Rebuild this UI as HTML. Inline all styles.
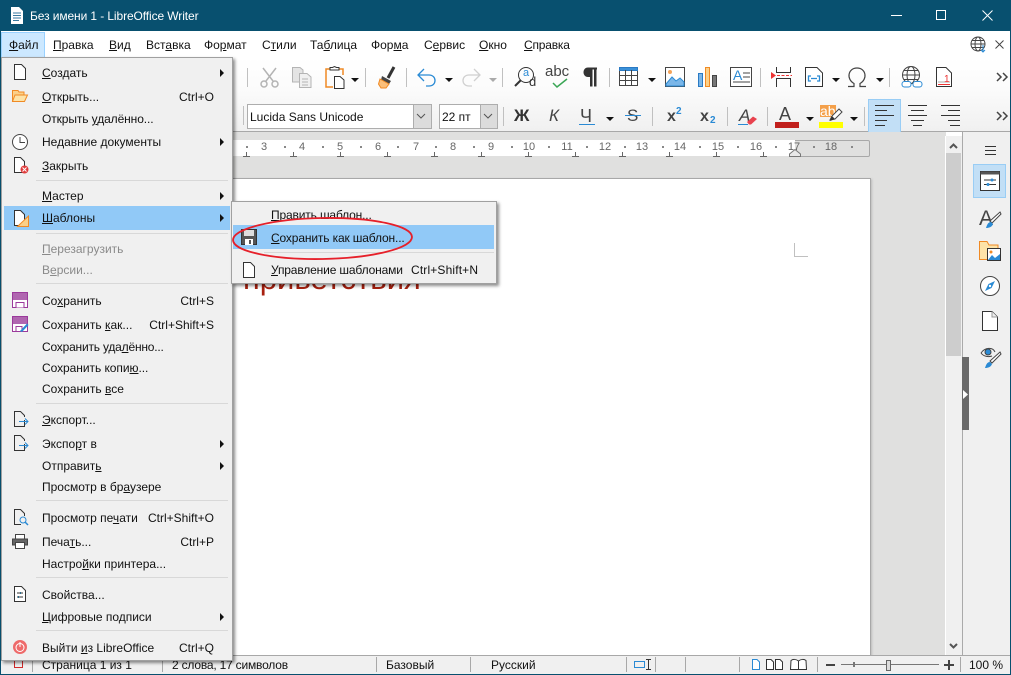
<!DOCTYPE html>
<html lang="ru"><head><meta charset="utf-8"><title>Без имени 1 - LibreOffice Writer</title>
<style>
html,body{margin:0;padding:0;background:#fff}
#w{position:relative;width:1011px;height:675px;overflow:hidden;background:#fff;font:12px/16px "Liberation Sans",sans-serif;color:#111}
.a{position:absolute}
.t{position:absolute;white-space:nowrap;line-height:16px}
.k{position:absolute;white-space:nowrap;line-height:16px;right:18px;text-align:right}
.s{position:absolute;background:#c0c0c0;width:1px}
.d{position:absolute;width:0;height:0;border-left:4px solid transparent;border-right:4px solid transparent;border-top:4px solid #111}
.m{position:absolute;left:35px;right:4px;height:1px;background:#d8d8d8}
.r{position:absolute;width:0;height:0;border-top:4px solid transparent;border-bottom:4px solid transparent;border-left:4px solid #111;left:219px}
.g{color:#8a8a8a}
svg{position:absolute;overflow:visible}
.n{position:absolute;top:140px;font-size:11px;line-height:14px;color:#666;width:16px;text-align:center}
.mk{position:absolute;top:146px;width:2px;height:2px;background:#888}
.bt{position:absolute;top:152px;width:7px;height:4px;border-bottom:1px solid #666}
.bt:after{content:"";position:absolute;left:3px;top:0;height:4px;width:1px;background:#666}
.st{position:absolute;top:657px;width:1px;height:15px;background:#a8a8a8}
</style></head><body><div id="w">

<!-- title bar -->
<div class="a" style="left:0;top:0;width:1011px;height:31px;background:#08506f"></div>
<svg style="left:11px;top:7px" width="12" height="17" viewBox="0 0 12 17"><path d="M0 0H8L12 4V17H0Z" fill="#fff"/><path d="M2 6H10M2 8.500H10M2 11H10M2 13.500H8" stroke="#3a7aa0"/></svg>
<div class="t" style="left:30px;top:8px;color:#fff;font-size:12px;letter-spacing:-.1px">Без имени 1 - LibreOffice Writer</div>
<div class="a" style="left:891px;top:15px;width:11px;height:1px;background:#fff"></div>
<div class="a" style="left:936px;top:10px;width:8px;height:8px;border:1px solid #fff"></div>
<svg style="left:982px;top:10px" width="11" height="11"><path d="M.5 .5L10.500 10.500M10.500 .5L.5 10.500" stroke="#fff"/></svg>
<div class="a" style="left:0;top:31px;width:1px;height:644px;background:#08506f"></div>
<div class="a" style="left:1010px;top:31px;width:1px;height:644px;background:#08506f"></div>

<!-- menu bar -->
<div class="a" style="left:1px;top:32px;width:42px;height:24px;background:#cce8ff;border:1px solid #99d1ff"></div>
<div class="t" style="left:9px;top:37px"><u>Ф</u>айл</div>
<div class="t" style="left:53px;top:37px"><u>П</u>равка</div>
<div class="t" style="left:109px;top:37px"><u>В</u>ид</div>
<div class="t" style="left:146px;top:37px">Вст<u>а</u>вка</div>
<div class="t" style="left:204px;top:37px">Фо<u>р</u>мат</div>
<div class="t" style="left:262px;top:37px">С<u>т</u>или</div>
<div class="t" style="left:310px;top:37px">Та<u>б</u>лица</div>
<div class="t" style="left:371px;top:37px">Фор<u>м</u>а</div>
<div class="t" style="left:424px;top:37px">С<u>е</u>рвис</div>
<div class="t" style="left:479px;top:37px"><u>О</u>кно</div>
<div class="t" style="left:524px;top:37px;letter-spacing:-.2px"><u>С</u>правка</div>
<svg style="left:970px;top:36px" width="17" height="17" viewBox="0 0 17 17" fill="none" stroke="#444"><circle cx="8" cy="8" r="7"/><ellipse cx="8" cy="8" rx="3" ry="7"/><path d="M1 8H15M2 4.500H14M2 11.500H14"/><path d="M13 9V16M11 14L13 16L15 14" stroke="#2a8ad4"/></svg>
<svg style="left:995px;top:40px" width="9" height="9"><path d="M.5 .5L8.500 8.500M8.500 .5L.5 8.500" stroke="#444"/></svg>

<!-- toolbars -->
<div class="a" style="left:1px;top:57px;width:1009px;height:74px;background:linear-gradient(#fff,#fbfbfb 45%,#f0f0f0)"></div>
<div class="a" style="left:1px;top:131px;width:1009px;height:1px;background:#a8a8a8"></div>
<div class="s" style="left:247px;top:68px;height:19px"></div>
<svg style="left:260px;top:67px" width="19" height="21" fill="none" stroke="#b4b4b4" stroke-width="1.500"><path d="M3 1L13 14M16 1L6 14"/><circle cx="4" cy="17" r="3"/><circle cx="15" cy="17" r="3"/></svg>
<svg style="left:292px;top:67px" width="20" height="21" fill="#e4e4e4" stroke="#b4b4b4"><path d="M.5 .5H8L11 3V15H.5Z"/><path d="M7.500 6.500H15L19 10V20.500H7.500Z" fill="#f0f0f0"/><path d="M10 12H16M10 15H16M10 18H16"/></svg>
<svg style="left:325px;top:66px" width="20" height="23" fill="none"><path d="M5 3H1V21H8M14 3H18V9" stroke="#f08a24" stroke-width="1.500"/><path d="M5 4V1.500H7.500L9.500 .5L11.500 1.500H14V4Z" stroke="#333"/><path d="M9.500 10.500H15L19 14V22.500H9.500Z" fill="#fff" stroke="#333"/></svg>
<div class="d" style="left:351px;top:78px"></div>
<div class="s" style="left:365px;top:68px;height:19px"></div>
<svg style="left:378px;top:66px" width="18" height="23"><path d="M10 12L16 1" stroke="#333" stroke-width="3"/><path d="M4 10L13 15L11 18H2Z" fill="#444"/><path d="M2 13L11 18L8 22H3L.5 18Z" fill="#fbbf7a" stroke="#f08a24"/></svg>
<div class="s" style="left:406px;top:68px;height:19px"></div>
<svg style="left:417px;top:68px" width="20" height="19" fill="none" stroke="#2a8ad4" stroke-width="1.300"><path d="M7 1L1 7L7 13M1 7H12C20 7 20 18 12 18H9"/></svg>
<div class="d" style="left:445px;top:78px"></div>
<svg style="left:461px;top:68px" width="20" height="19" fill="none" stroke="#d0d0d0" stroke-width="1.300"><path d="M13 1L19 7L13 13M19 7H8C0 7 0 18 8 18H11"/></svg>
<div class="d" style="left:489px;top:78px;border-top-color:#aaa"></div>
<div class="s" style="left:502px;top:68px;height:19px"></div>
<svg style="left:514px;top:66px" width="23" height="23" fill="none"><circle cx="12" cy="9" r="7.500" stroke="#333"/><path d="M7 14L1 20" stroke="#333" stroke-width="2"/></svg>
<div class="t" style="left:523px;top:65px;font-size:11px;color:#2a8ad4">a</div>
<div class="t" style="left:529px;top:74px;font-size:13px;color:#333">d</div>
<div class="t" style="left:545px;top:64px;font-size:15px;color:#444">abc</div>
<svg style="left:552px;top:78px" width="16" height="10" fill="none" stroke="#3aa655" stroke-width="1.500"><path d="M1 5L5 9L15 1"/></svg>
<svg style="left:582px;top:67px" width="16" height="20"><path d="M15 .5H6C0 .5 0 10 6 10H8V19.500H10.500V2.500H12V19.500H14.500V2.500H15Z" fill="#333"/></svg>
<div class="s" style="left:609px;top:68px;height:19px"></div>
<svg style="left:619px;top:67px" width="20" height="20" fill="#fff" stroke="#444"><rect x=".5" y=".5" width="18" height="18"/><rect x=".5" y=".5" width="18" height="3" fill="#3a90d8" stroke="#2a7ac4"/><path d="M.5 8.500H18.500M.5 13.500H18.500M6.500 3V18.500M12.500 3V18.500" fill="none"/></svg>
<div class="d" style="left:648px;top:78px"></div>
<svg style="left:665px;top:67px" width="20" height="20"><rect x=".5" y=".5" width="19" height="19" fill="#fff" stroke="#444"/><path d="M1 17L7 10L11 14L15 11L19 15V19H1Z" fill="#7ab6e8" stroke="#2a8ad4"/><circle cx="5" cy="5" r="2" fill="#f4a45a"/></svg>
<svg style="left:698px;top:67px" width="20" height="20" stroke-width="1"><rect x=".5" y="6.500" width="4" height="13" fill="#7ab6e8" stroke="#2a7ac4"/><rect x="7.500" y=".5" width="4" height="19" fill="#fbd089" stroke="#f08a24"/><rect x="14.500" y="8.500" width="4" height="11" fill="#777" stroke="#444"/></svg>
<svg style="left:730px;top:67px" width="22" height="20" fill="#fff" stroke="#444"><rect x=".5" y=".5" width="21" height="19"/><path d="M13 6H20M13 10H20M3 15H20" fill="none"/></svg>
<div class="t" style="left:733px;top:67px;font-size:14px;color:#2a8ad4">A</div>
<div class="s" style="left:760px;top:68px;height:19px"></div>
<svg style="left:771px;top:67px" width="22" height="20" fill="none" stroke="#333"><path d="M5.500 0V5.500H19.500V0M5.500 20V11.500H19.500V20"/><path d="M6 8.500H21" stroke="#e33" stroke-dasharray="3 1.500"/><path d="M0 5L5 8.500L0 12Z" fill="#e33" stroke="none"/></svg>
<svg style="left:805px;top:67px" width="18" height="20" fill="#fff" stroke="#333"><path d="M.5 .5H12L17.500 6V19.500H.5Z"/><path d="M6 9H3.500V14H6M12 9H14.500V14H12M6 11.500H12" stroke="#2a8ad4" stroke-width="1.300" fill="none"/></svg>
<div class="d" style="left:832px;top:78px"></div>
<svg style="left:847px;top:67px" width="20" height="20" fill="none" stroke="#444" stroke-width="1.200"><path d="M1 19.500H7V16.500C-1 12 1 1 10 1C19 1 21 12 13 16.500V19.500H19"/></svg>
<div class="d" style="left:876px;top:78px"></div>
<div class="s" style="left:889px;top:68px;height:19px"></div>
<svg style="left:901px;top:66px" width="22" height="22" fill="none"><g stroke="#444"><circle cx="10" cy="9" r="8.500"/><ellipse cx="10" cy="9" rx="4" ry="8.500"/><path d="M1.500 9H18.500M3 4.500H17M3 13.500H17"/></g><rect x="1" y="15.500" width="9" height="5.500" rx="2.500" fill="#fff" stroke="#2a8ad4"/><rect x="12" y="15.500" width="9" height="5.500" rx="2.500" fill="#fff" stroke="#2a8ad4"/></svg>
<svg style="left:936px;top:67px" width="16" height="20" fill="#fff" stroke="#333"><path d="M.5 .5H10L15.500 6V19.500H.5Z"/><path d="M2 15H14" stroke="#aaa" fill="none"/><path d="M2 17.500H14" stroke="#e33" fill="none"/></svg>
<div class="t" style="left:944px;top:72px;font-size:10px;color:#e33">1</div>
<svg style="left:996px;top:72px" width="13" height="10" fill="none" stroke="#444" stroke-width="1.500"><path d="M1 1L5 5L1 9M7 1L11 5L7 9"/></svg>

<!-- row 2 -->
<div class="s" style="left:243px;top:106px;height:19px"></div>
<div class="a" style="left:247px;top:104px;width:183px;height:23px;background:#fff;border:1px solid #adadad"></div>
<div class="a" style="left:413px;top:105px;width:17px;height:23px;background:#dcdcdc;border-left:1px solid #adadad"></div>
<svg style="left:416px;top:113px" width="10" height="6" fill="none" stroke="#555"><path d="M1 1L5 5L9 1"/></svg>
<div class="t" style="left:250px;top:109px">Lucida Sans Unicode</div>
<div class="a" style="left:439px;top:104px;width:57px;height:23px;background:#fff;border:1px solid #adadad"></div>
<div class="a" style="left:480px;top:105px;width:16px;height:23px;background:#dcdcdc;border-left:1px solid #adadad"></div>
<svg style="left:483px;top:113px" width="10" height="6" fill="none" stroke="#555"><path d="M1 1L5 5L9 1"/></svg>
<div class="t" style="left:442px;top:109px">22 пт</div>
<div class="s" style="left:503px;top:107px;height:19px"></div>
<div class="t" style="left:514px;top:108px;font-size:17px;font-weight:bold;color:#333">Ж</div>
<div class="t" style="left:549px;top:108px;font-size:17px;font-style:italic;color:#444">К</div>
<div class="t" style="left:580px;top:108px;font-size:18px;color:#444">Ч</div>
<div class="a" style="left:579px;top:124px;width:16px;height:1px;background:#2a8ad4"></div>
<div class="d" style="left:606px;top:117px"></div>
<div class="t" style="left:627px;top:108px;font-size:17px;color:#444">S</div>
<div class="a" style="left:625px;top:115px;width:16px;height:1px;background:#2a8ad4"></div>
<div class="s" style="left:652px;top:107px;height:19px"></div>
<div class="t" style="left:667px;top:109px;font-size:16px;color:#444;font-weight:bold">x</div>
<div class="t" style="left:676px;top:104px;font-size:10px;color:#2a8ad4;font-weight:bold">2</div>
<div class="t" style="left:700px;top:109px;font-size:16px;color:#444;font-weight:bold">x</div>
<div class="t" style="left:710px;top:113px;font-size:10px;color:#2a8ad4;font-weight:bold">2</div>
<div class="s" style="left:727px;top:107px;height:19px"></div>
<div class="t" style="left:739px;top:108px;font-size:17px;font-style:italic;color:#444">A</div>
<div class="a" style="left:738px;top:124px;width:10px;height:1px;background:#2a8ad4"></div>
<svg style="left:746px;top:116px" width="12" height="9"><path d="M1 6L7 .5L11 3L5 8.500H3Z" fill="#e8424e"/></svg>
<div class="s" style="left:767px;top:107px;height:19px"></div>
<div class="t" style="left:779px;top:106px;font-size:18px;color:#444">A</div>
<div class="a" style="left:775px;top:122px;width:24px;height:6px;background:#c1201c"></div>
<div class="d" style="left:806px;top:117px"></div>
<div class="a" style="left:820px;top:105px;width:16px;height:12px;background:#f4a04a"></div>
<div class="t" style="left:820px;top:103px;font-size:14px;color:#fff">ab</div>
<svg style="left:829px;top:108px" width="14" height="14"><path d="M1 12L3 8L10 1L13 4L6 11Z" fill="#fff" stroke="#444"/><path d="M1 13L3 8L6 11Z" fill="#333"/></svg>
<div class="a" style="left:819px;top:122px;width:24px;height:6px;background:#ff0"></div>
<div class="d" style="left:850px;top:117px"></div>
<div class="s" style="left:864px;top:107px;height:19px"></div>
<div class="a" style="left:868px;top:99px;width:31px;height:32px;background:#c2dff6;border:1px solid #99cdf5"></div>
<svg style="left:875px;top:105px" width="19" height="22" stroke="#333" fill="none"><path d="M0 .5H19M0 5.500H12M0 10.500H19M0 15.500H12M0 20.500H10"/></svg>
<svg style="left:908px;top:105px" width="19" height="22" stroke="#333" fill="none"><path d="M0 .5H19M3 5.500H16M0 10.500H19M3 15.500H16M5 20.500H14"/></svg>
<svg style="left:941px;top:105px" width="19" height="22" stroke="#333" fill="none"><path d="M0 .5H19M7 5.500H19M0 10.500H19M7 15.500H19M9 20.500H19"/></svg>
<svg style="left:996px;top:111px" width="13" height="10" fill="none" stroke="#444" stroke-width="1.500"><path d="M1 1L5 5L1 9M7 1L11 5L7 9"/></svg>

<!-- doc area -->
<div class="a" style="left:1px;top:132px;width:945px;height:524px;background:#e0e0df"></div>
<div class="a" style="left:233px;top:140px;width:562px;height:16px;background:#fff"></div>
<div class="a" style="left:795px;top:140px;width:74px;height:15px;background:#e0e0df;border:1px solid #a8a8a8;border-left:0;border-radius:0 2px 2px 0"></div>
<div class="n" style="left:256px">3</div><div class="n" style="left:294px">4</div><div class="n" style="left:332px">5</div><div class="n" style="left:370px">6</div><div class="n" style="left:408px">7</div><div class="n" style="left:445px">8</div><div class="n" style="left:483px">9</div><div class="n" style="left:521px">10</div><div class="n" style="left:559px">11</div><div class="n" style="left:597px">12</div><div class="n" style="left:634px">13</div><div class="n" style="left:672px">14</div><div class="n" style="left:710px">15</div><div class="n" style="left:748px">16</div><div class="n" style="left:786px">17</div><div class="n" style="left:823px">18</div>
<div class="mk" style="left:246px"></div><div class="mk" style="left:284px"></div><div class="mk" style="left:322px"></div><div class="mk" style="left:360px"></div><div class="mk" style="left:397px"></div><div class="mk" style="left:435px"></div><div class="mk" style="left:473px"></div><div class="mk" style="left:511px"></div><div class="mk" style="left:548px"></div><div class="mk" style="left:586px"></div><div class="mk" style="left:624px"></div><div class="mk" style="left:662px"></div><div class="mk" style="left:699px"></div><div class="mk" style="left:737px"></div><div class="mk" style="left:775px"></div><div class="mk" style="left:813px"></div><div class="mk" style="left:851px"></div>
<div class="bt" style="left:243px"></div><div class="bt" style="left:290px"></div><div class="bt" style="left:337px"></div><div class="bt" style="left:384px"></div><div class="bt" style="left:431px"></div><div class="bt" style="left:478px"></div><div class="bt" style="left:525px"></div><div class="bt" style="left:572px"></div><div class="bt" style="left:619px"></div><div class="bt" style="left:666px"></div><div class="bt" style="left:713px"></div><div class="bt" style="left:760px"></div>
<svg style="left:789px;top:149px" width="12" height="8"><path d="M.5 7.500V5L6 .5L11.500 5V7.500Z" fill="#e8e8e8" stroke="#777"/></svg>

<!-- page -->
<div class="a" style="left:100px;top:178px;width:769px;height:480px;background:#fff;border:1px solid #a8a8a8;box-shadow:1px 1px 2px #bbb"></div>
<svg style="left:794px;top:243px" width="14" height="14" fill="none" stroke="#c0c0c0"><path d="M.5 0V13.500H14"/></svg>
<div class="t" style="left:243px;top:262px;font-size:31px;line-height:34px;color:#a8200f">приветствия</div>

<!-- scrollbar -->
<div class="a" style="left:945px;top:136px;width:17px;height:520px;background:#f0f0f0;border-left:1px solid #fff"></div>
<div class="a" style="left:946px;top:153px;width:15px;height:203px;background:#cdcdcd"></div>
<svg style="left:949px;top:143px" width="9" height="6" fill="none" stroke="#555" stroke-width="2"><path d="M1 5L4.500 1.500L8 5"/></svg>
<svg style="left:949px;top:643px" width="9" height="6" fill="none" stroke="#555" stroke-width="2"><path d="M1 1L4.500 4.500L8 1"/></svg>

<!-- sidebar -->
<div class="a" style="left:962px;top:132px;width:48px;height:524px;background:#f0f0f0;border-left:1px solid #aaa;box-sizing:border-box"></div>
<div class="a" style="left:962px;top:357px;width:7px;height:73px;background:#696969"></div>
<svg style="left:963px;top:390px" width="6" height="9"><path d="M0 0L5 4.500L0 9Z" fill="#fff"/></svg>
<svg style="left:985px;top:146px" width="11" height="9" stroke="#333"><path d="M0 .5H11M0 4.500H11M0 8.500H11"/></svg>
<div class="a" style="left:973px;top:164px;width:31px;height:32px;background:#c2dff6;border:1px solid #99cdf5"></div>
<svg style="left:980px;top:171px" width="20" height="20"><rect x=".5" y=".5" width="19" height="19" fill="#fff" stroke="#333"/><rect x=".5" y=".5" width="19" height="3" fill="#555"/><path d="M4 9H16M4 13.500H16" stroke="#333"/><circle cx="12" cy="9" r="1.500" fill="#2a8ad4"/><circle cx="8" cy="13.500" r="1.500" fill="#2a8ad4"/></svg>
<div class="t" style="left:979px;top:208px;font-size:21px;line-height:22px;color:#444">A</div>
<svg style="left:985px;top:211px" width="17" height="18"><path d="M15 1L16 3L7 12L5 10Z" fill="#fff" stroke="#444"/><path d="M1 17C2 14 3 11 6 11L8 13C7 16 4 17 1 17Z" fill="#2a8ad4"/></svg>
<svg style="left:979px;top:241px" width="23" height="21"><path d="M.5 18.500V.5H8L10 4H19V18.500Z" fill="#fde3a8" stroke="#f08a24"/><rect x="8.500" y="7.500" width="13" height="12" fill="#fff" stroke="#333"/><path d="M9 19L13 14L16 17L21 13V19Z" fill="#2a8ad4"/><circle cx="12" cy="11" r="1.500" fill="#f08a24"/></svg>
<svg style="left:980px;top:276px" width="20" height="20"><circle cx="10" cy="10" r="9.500" fill="#fff" stroke="#444"/><path d="M15 5L11.500 12L5 15L8.500 8Z" fill="#2a8ad4"/><circle cx="10" cy="10" r="1.200" fill="#fff"/></svg>
<svg style="left:982px;top:311px" width="16" height="20"><path d="M.5 .5H10L15.500 6V19.500H.5Z" fill="#fff" stroke="#333"/><path d="M10 .5V6H15.500" fill="#eee" stroke="#999"/></svg>
<svg style="left:980px;top:346px" width="22" height="22" fill="none"><path d="M1 7C5 1 13 1 15 6" stroke="#444"/><path d="M1 7C4 11 9 11 12 10" stroke="#444"/><circle cx="8" cy="6" r="3" fill="#2a8ad4" stroke="#444"/><path d="M20 6L21 8L12 17L10 15Z" fill="#fff" stroke="#444"/><path d="M5 22C6 19 7 16 10 16L12 18C11 21 8 22 5 22Z" fill="#2a8ad4"/></svg>

<!-- status bar -->
<div class="a" style="left:1px;top:655px;width:1009px;height:19px;background:#f0f0f0;border-top:1px solid #a8a8a8;box-sizing:border-box"></div>
<div class="a" style="left:0;top:674px;width:1011px;height:1px;background:#08506f"></div>
<div class="a" style="left:14px;top:660px;width:9px;height:8px;border:1px solid #d02a2a;box-sizing:border-box"></div>
<div class="st" style="left:32px"></div>
<div class="t" style="left:42px;top:657px">Страница 1 из 1</div>
<div class="st" style="left:162px"></div>
<div class="t" style="left:172px;top:657px;letter-spacing:-.2px">2 слова, 17 символов</div>
<div class="st" style="left:376px"></div>
<div class="t" style="left:386px;top:657px">Базовый</div>
<div class="st" style="left:470px"></div>
<div class="t" style="left:491px;top:657px">Русский</div>
<div class="st" style="left:626px"></div>
<div class="a" style="left:634px;top:661px;width:11px;height:7px;border:1px solid #2a8ad4;box-sizing:border-box"></div>
<svg style="left:646px;top:659px" width="5" height="11" stroke="#333" fill="none"><path d="M0 .5H5M0 10.500H5M2.500 0V11"/></svg>
<div class="st" style="left:655px"></div><div class="st" style="left:685px"></div><div class="st" style="left:739px"></div>
<svg style="left:752px;top:659px" width="8" height="11" fill="#fff" stroke="#2a8ad4"><path d="M.5 .5H5L7.500 3V10.500H.5Z"/></svg>
<svg style="left:766px;top:659px" width="18" height="11" fill="#fff" stroke="#333"><path d="M.5 .5H5L7.500 3V10.500H.5ZM9.500 .5H14L16.500 3V10.500H9.500Z"/></svg>
<svg style="left:790px;top:659px" width="17" height="11" fill="#fff" stroke="#333"><path d="M8.500 2C6 0 3 0 1 1.500L.5 10.500H8.500V2C11 0 14 0 16 1.500L16.500 10.500H8.500"/></svg>
<div class="st" style="left:817px"></div>
<div class="a" style="left:826px;top:664px;width:9px;height:2px;background:#444"></div>
<div class="a" style="left:841px;top:664px;width:98px;height:1px;background:#777"></div>
<div class="a" style="left:853px;top:662px;width:2px;height:5px;background:#777"></div>
<div class="a" style="left:886px;top:660px;width:3px;height:9px;background:#ddd;border:1px solid #666"></div>
<svg style="left:944px;top:660px" width="10" height="10"><path d="M0 5H10M5 0V10" stroke="#444" stroke-width="2"/></svg>
<div class="st" style="left:960px"></div>
<div class="t" style="left:969px;top:657px">100 %</div>

<!-- file menu -->
<div class="a" style="left:1px;top:57px;width:232px;height:604px;background:#f0f0f0;border:1px solid #a0a0a0;box-sizing:border-box;box-shadow:2px 2px 3px rgba(0,0,0,.45)"></div>
<div class="a" style="left:1px;top:57px;width:231px;height:604px">
<div class="m" style="top:123px"></div><div class="m" style="top:176px"></div><div class="m" style="top:226px"></div><div class="m" style="top:346px"></div><div class="m" style="top:443px"></div><div class="m" style="top:520px"></div><div class="m" style="top:573px"></div>
<div class="a" style="left:3px;top:149px;width:226px;height:24px;background:#91c9f7"></div>

<div class="t" style="left:41px;top:8px"><u>С</u>оздать</div><div class="r" style="top:12px"></div>
<div class="t" style="left:41px;top:32px"><u>О</u>ткрыть...</div><div class="k" style="top:32px">Ctrl+O</div>
<div class="t" style="left:41px;top:54px;letter-spacing:-.1px">Открыть <u>у</u>далённо...</div>
<div class="t" style="left:41px;top:77px">Недавние <u>д</u>окументы</div><div class="r" style="top:81px"></div>
<div class="t" style="left:41px;top:101px"><u>З</u>акрыть</div>
<div class="t" style="left:41px;top:131px"><u>М</u>астер</div><div class="r" style="top:135px"></div>
<div class="t" style="left:41px;top:153px"><u>Ш</u>аблоны</div><div class="r" style="top:157px"></div>
<div class="t g" style="left:41px;top:184px"><u>П</u>ерезагрузить</div>
<div class="t g" style="left:41px;top:205px">В<u>е</u>рсии...</div>
<div class="t" style="left:41px;top:236px">Со<u>х</u>ранить</div><div class="k" style="top:236px">Ctrl+S</div>
<div class="t" style="left:41px;top:260px">Сохранить <u>к</u>ак...</div><div class="k" style="top:260px">Ctrl+Shift+S</div>
<div class="t" style="left:41px;top:282px;letter-spacing:-.2px">Сохранить уда<u>л</u>ённо...</div>
<div class="t" style="left:41px;top:303px;letter-spacing:-.05px">Сохранить копи<u>ю</u>...</div>
<div class="t" style="left:41px;top:324px">Сохранить <u>в</u>се</div>
<div class="t" style="left:41px;top:355px"><u>Э</u>кспорт...</div>
<div class="t" style="left:41px;top:379px">Экспо<u>р</u>т в</div><div class="r" style="top:383px"></div>
<div class="t" style="left:41px;top:401px">Отправит<u>ь</u></div><div class="r" style="top:405px"></div>
<div class="t" style="left:41px;top:422px">Просмотр в бр<u>а</u>узере</div>
<div class="t" style="left:41px;top:453px">Просмотр пе<u>ч</u>ати</div><div class="k" style="top:453px">Ctrl+Shift+O</div>
<div class="t" style="left:41px;top:477px">Печа<u>т</u>ь...</div><div class="k" style="top:477px">Ctrl+P</div>
<div class="t" style="left:41px;top:499px">Настро<u>й</u>ки принтера...</div>
<div class="t" style="left:41px;top:530px">Свойства...</div>
<div class="t" style="left:41px;top:552px"><u>Ц</u>ифровые подписи</div><div class="r" style="top:556px"></div>
<div class="t" style="left:41px;top:583px">Выйти <u>и</u>з LibreOffice</div><div class="k" style="top:583px">Ctrl+Q</div>
</div>

<!-- menu icons -->
<svg style="left:14px;top:64px" width="12" height="16" fill="#fff" stroke="#333"><path d="M.5 .5H7.500L11.500 4.500V15.500H.5Z"/></svg>
<svg style="left:12px;top:90px" width="16" height="12"><path d="M.5 .5H6L7 2H12V11H.5Z" fill="#fbd089" stroke="#f08a24"/><path d="M3 5H15.500L12.500 11.500H.5Z" fill="#fde3a8" stroke="#f08a24"/></svg>
<svg style="left:12px;top:134px" width="16" height="16" fill="#fff" stroke="#444"><circle cx="8" cy="8" r="7.500"/><path d="M8 3V8.500H13" fill="none"/></svg>
<svg style="left:14px;top:157px" width="15" height="17"><path d="M.5 .5H6.500L10.500 4.500V15.500H.5Z" fill="#fff" stroke="#333"/><circle cx="10.500" cy="12.500" r="4" fill="#e03c3c"/><path d="M8.500 10.500L12.500 14.500M12.500 10.500L8.500 14.500" stroke="#fff"/></svg>
<svg style="left:14px;top:210px" width="15" height="17"><path d="M.5 .5H6.500L10.500 4.500V15.500H.5Z" fill="#fff" stroke="#333"/><path d="M14.500 6V16.500H3.500Z" fill="#fbd089" stroke="#f08a24"/></svg>
<svg style="left:12px;top:292px" width="16" height="16"><rect x=".5" y=".5" width="15" height="15" fill="#fff" stroke="#9b3a9b"/><rect x="1" y="1" width="14" height="7" fill="#b066b0"/><path d="M4 15.500V10.500H12V15.500" fill="#fff" stroke="#9b3a9b"/></svg>
<svg style="left:12px;top:316px" width="17" height="16"><rect x=".5" y=".5" width="15" height="15" fill="#fff" stroke="#9b3a9b"/><rect x="1" y="1" width="14" height="7" fill="#b066b0"/><path d="M4 15.500V10.500H10V15.500" fill="none" stroke="#9b3a9b"/><path d="M8 15L15 7.500L16.500 9L10 16Z" fill="#2a8ad4"/></svg>
<svg style="left:14px;top:411px" width="15" height="17" fill="none"><path d="M10.500 9V15.500H.5V.5H6.500L10.500 4.500V6" stroke="#333"/><path d="M5 10.500H14M11 7.500L14 10.500L11 13.500" stroke="#2a8ad4"/></svg>
<svg style="left:14px;top:435px" width="15" height="17" fill="none"><path d="M10.500 9V15.500H.5V.5H6.500L10.500 4.500V6" stroke="#333"/><path d="M5 10.500H14M11 7.500L14 10.500L11 13.500" stroke="#2a8ad4"/></svg>
<svg style="left:14px;top:509px" width="15" height="17" fill="none"><path d="M7 15.500H.5V.5H6.500L10.500 4.500V7" stroke="#333"/><circle cx="9" cy="11" r="3" stroke="#2a8ad4"/><path d="M11 13L14 16" stroke="#2a8ad4" stroke-width="1.500"/></svg>
<svg style="left:12px;top:534px" width="16" height="15"><rect x="3.500" y=".5" width="9" height="5" fill="#fff" stroke="#444"/><path d="M.5 5H15.500V11H.5Z" fill="#666" stroke="#444"/><rect x="3.500" y="8.500" width="9" height="6" fill="#fff" stroke="#444"/></svg>
<svg style="left:14px;top:586px" width="12" height="16"><path d="M.5 .5H7.500L11.500 4.500V15.500H.5Z" fill="#fff" stroke="#333"/><path d="M3 7H9M3 11H9" stroke="#333"/><path d="M6.500 6V8M4.500 10V12" stroke="#2a6a8a"/></svg>
<svg style="left:13px;top:640px" width="14" height="14"><circle cx="7" cy="7" r="7" fill="#ee6a6a"/><circle cx="7" cy="7.500" r="4" fill="none" stroke="#fff"/><path d="M7 2V7" stroke="#fff"/></svg>

<!-- submenu -->
<div class="a" style="left:231px;top:201px;width:266px;height:83px;background:#f0f0f0;border:1px solid #a0a0a0;box-sizing:border-box;box-shadow:2px 2px 3px rgba(0,0,0,.45)"></div>
<div class="a" style="left:233px;top:225px;width:261px;height:24px;background:#91c9f7"></div>
<div class="a" style="left:264px;top:252px;width:230px;height:1px;background:#d8d8d8"></div>
<div class="t" style="left:271px;top:207px;letter-spacing:-.15px"><u>П</u>равить шаблон...</div>
<div class="t" style="left:271px;top:230px;letter-spacing:-.14px"><u>С</u>охранить как шаблон...</div>
<div class="t" style="left:271px;top:262px;letter-spacing:-.15px"><u>У</u>правление шаблонами</div>
<div class="t" style="left:411px;top:262px;letter-spacing:.15px">Ctrl+Shift+N</div>
<svg style="left:241px;top:229px" width="16" height="16"><rect x=".5" y=".5" width="15" height="15" fill="#555" stroke="#333"/><rect x="3" y="1" width="10" height="6" fill="#ddd"/><rect x="4" y="10" width="8" height="6" fill="#fff"/><rect x="8" y="11" width="2" height="4" fill="#555"/></svg>
<svg style="left:243px;top:262px" width="12" height="16" fill="#fff" stroke="#333"><path d="M.5 .5H7.500L11.500 4.500V15.500H.5Z"/></svg>
<svg style="left:231px;top:216px" width="184" height="48" fill="none"><ellipse cx="91.500" cy="22.500" rx="89.500" ry="20.500" transform="rotate(-1 91.500 22.500)" stroke="#e6202a" stroke-width="1.800"/></svg>

</div></body></html>
